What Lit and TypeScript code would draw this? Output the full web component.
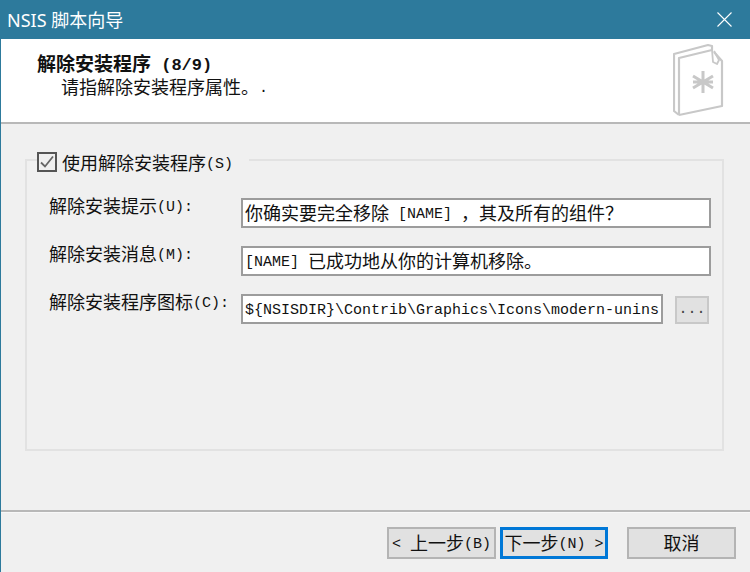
import { LitElement, html, css } from "lit";
import { customElement } from "lit/decorators.js";

@customElement("app-root")
export class AppRoot extends LitElement {
  static styles = css`
    :host {
      display: flex;
      flex-direction: column;
      width: 750px;
      height: 572px;
      box-sizing: border-box;
      border-left: 1px solid #2d7a9c;
      background: #f0f0f0;
      color: #111;
      font-family: "Noto Sans CJK SC", sans-serif;
      font-size: 18px;
      line-height: 22px;
      overflow: hidden;
    }
    .l {
      font-family: "Liberation Mono", monospace;
      font-size: 15px;
      vertical-align: 2px;
      line-height: 16px;
    }
    .titlebar {
      flex: none;
      height: 39px;
      margin-left: -1px;
      background: #2d7a9c;
      color: #fff;
      display: flex;
      align-items: center;
      justify-content: space-between;
      padding: 0 18px 0 7px;
      font-family: "Noto Sans", "Noto Sans CJK SC", sans-serif;
      font-size: 18px;
    }
    .titlebar svg { display: block; }
    .header {
      flex: none;
      height: 85px;
      box-sizing: border-box;
      background: #fff;
      border-bottom: 2px solid #b8b8b8;
      display: flex;
      justify-content: space-between;
      padding: 13px 26px 0 36px;
    }
    .head-title {
      font-size: 19px;
      font-weight: 700;
      line-height: 22px;
      white-space: pre;
    }
    .head-title .l { font-size: 17px; font-weight: 700; vertical-align: 1px; }
    .head-sub {
      margin-left: 24px;
      line-height: 22px;
      margin-top: 1px;
    }
    .book { display: block; margin-top: -9px; }
    .body {
      flex: 1;
      padding: 35px 26px 0 24px;
    }
    .group {
      height: 292px;
      box-sizing: border-box;
      border: 2px solid #e2e2e2;
      padding: 0 11px 0 22px;
    }
    .legend {
      display: flex;
      align-items: center;
      gap: 5px;
      width: fit-content;
      margin: -10px 0 0 -12px;
      padding: 0 16px 0 0;
      height: 22px;
      background: #f0f0f0;
      white-space: nowrap;
    }
    .legend svg { display: block; flex: none; }
    .rows {
      display: flex;
      flex-direction: column;
      gap: 18px;
      margin-top: 25px;
    }
    .row { display: flex; }
    .lab {
      width: 192px;
      flex: none;
      margin-top: -4px;
      white-space: nowrap;
    }
    .field {
      width: 470px;
      height: 30px;
      box-sizing: border-box;
      border: 2px solid #9c9c9c;
      background: #fff;
      padding: 1px 2px;
      white-space: pre;
      overflow: hidden;
      line-height: 23px;
    }
    .field.short { width: 422px; }
    .dots {
      width: 34px;
      height: 28px;
      margin: 2px 0 0 12px;
      box-sizing: border-box;
      border: 2px solid #c8c8c8;
      background: #e1e1e1;
      padding: 0;
      color: #444;
      font-family: "Liberation Mono", monospace;
      font-size: 15px;
      line-height: 22px;
      text-align: center;
    }
    .foot {
      flex: none;
      height: 62px;
      box-sizing: border-box;
      border-top: 2px solid #b8b8b8;
      display: flex;
      align-items: flex-start;
      padding: 15px 13px 0 386px;
      box-shadow: inset 0 1px 0 #f8f8f8;
    }
    .btn {
      width: 109px;
      height: 32px;
      box-sizing: border-box;
      border: 2px solid #b4b4b4;
      background: #e1e1e1;
      color: #111;
      font: inherit;
      padding: 0 0 3px;
      white-space: pre;
      text-align: center;
      line-height: 24px;
    }
    .next {
      border: 3px solid #0078d7;
      margin: 0 19px 0 4px;
      width: 108px;
      line-height: 22px;
    }
  `;

  render() {
    return html`
      <div class="titlebar">
        <span>NSIS 脚本向导</span>
        <svg width="15" height="15" viewBox="0 0 15 15">
          <path d="M0.5 0.5L14.5 14.5M14.5 0.5L0.5 14.5" stroke="#fff" stroke-width="1.1" fill="none" />
        </svg>
      </div>
      <div class="header">
        <div>
          <div class="head-title">解除安装程序<span class="l"> (8/9)</span></div>
          <div class="head-sub">请指解除安装程序属性。<span class="l">.</span></div>
        </div>
        <svg class="book" width="51" height="76" viewBox="0 0 51 76" fill="none" stroke="#c8c8c8" stroke-width="2.2" stroke-linejoin="round">
          <path d="M6 72L1 68V11L35 2L39 3L39 8" />
          <path d="M6 72V15L39 7M6 72L49 63V18L41 9" />
          <path d="M41 8L46 17L44 21L40 19L39 7" stroke-width="1.8" />
          <path d="M30 28V50M20 33L40 45M40 33L20 45M20 39H40" stroke-width="3" />
        </svg>
      </div>
      <div class="body">
        <div class="group">
          <div class="legend">
            <svg width="20" height="20" viewBox="0 0 20 20" fill="none">
              <rect x="1" y="1" width="18" height="18" stroke="#555" stroke-width="2" />
              <path d="M4 10.5L8 14.5L16 4.5" stroke="#666" stroke-width="1.8" />
            </svg>
            <span>使用解除安装程序<span class="l">(S)</span></span>
          </div>
          <div class="rows">
            <div class="row">
              <div class="lab">解除安装提示<span class="l">(U):</span></div>
              <div class="field">你确实要完全移除<span class="l"> [NAME] </span>，其及所有的组件？</div>
            </div>
            <div class="row">
              <div class="lab">解除安装消息<span class="l">(M):</span></div>
              <div class="field"><span class="l">[NAME] </span>已成功地从你的计算机移除。</div>
            </div>
            <div class="row">
              <div class="lab">解除安装程序图标<span class="l">(C):</span></div>
              <div class="field short"><span class="l">\${NSISDIR}\\Contrib\\Graphics\\Icons\\modern-unins</span></div>
              <button class="dots">...</button>
            </div>
          </div>
        </div>
      </div>
      <div class="foot">
        <button class="btn"><span class="l">&lt; </span>上一步<span class="l">(B)</span></button>
        <button class="btn next">下一步<span class="l">(N) &gt;</span></button>
        <button class="btn">取消</button>
      </div>
    `;
  }
}
